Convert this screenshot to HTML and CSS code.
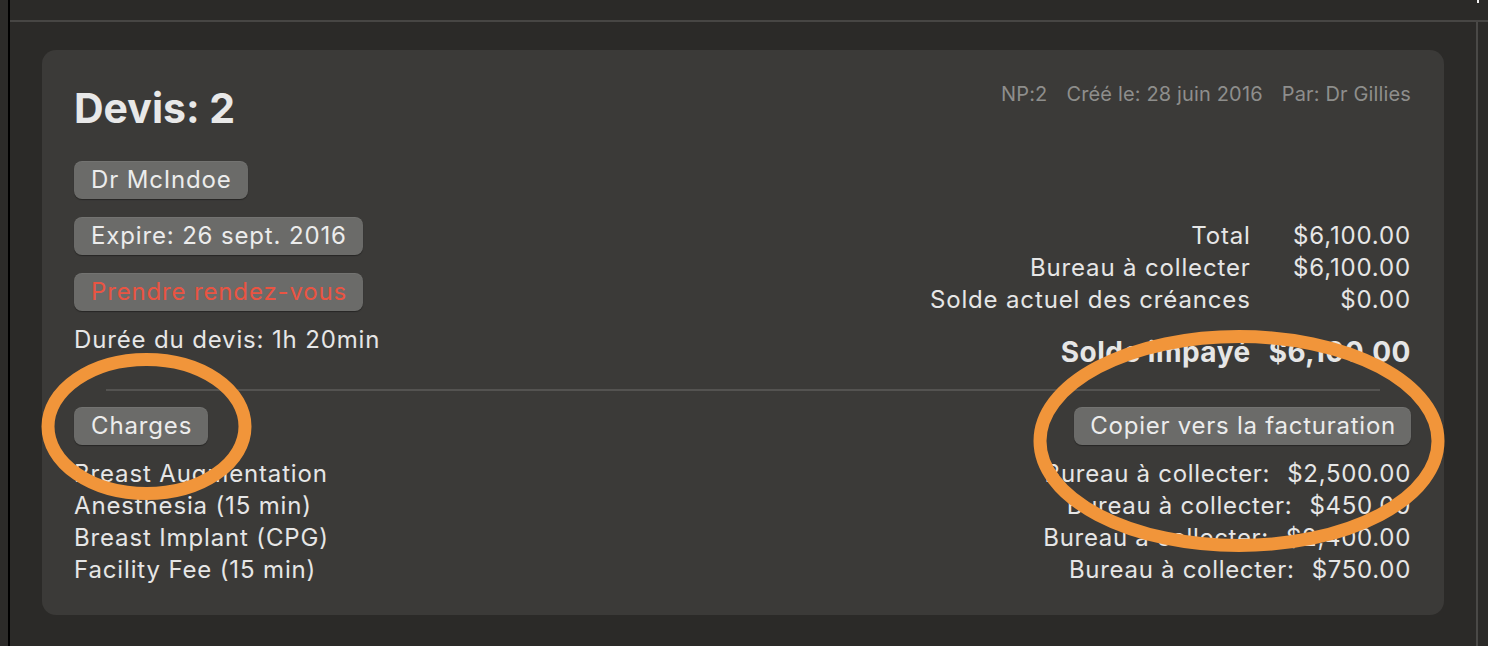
FILE: index.html
```html
<!DOCTYPE html>
<html lang="fr">
<head>
<meta charset="utf-8">
<title>Devis: 2</title>
<link rel="stylesheet" href="styles.css">
</head>
<body>
<div class="window">
  <div class="left-pane"></div>
  <div class="pane-split"></div>
  <div class="main">
    <div class="topbar"><span class="top-mark"></span></div>
    <div class="content-row">
      <div class="content">
        <section class="card">
          <div class="card-top">
            <div class="col-left">
              <h1 class="title">Devis: 2</h1>
              <button class="btn btn-first">Dr McIndoe</button>
              <button class="btn btn-next">Expire: 26 sept. 2016</button>
              <button class="btn btn-next btn-red">Prendre rendez-vous</button>
              <div class="duration">Durée du devis: 1h 20min</div>
            </div>
            <div class="col-right">
              <div class="meta">
                <span>NP:2</span>
                <span>Créé le: 28 juin 2016</span>
                <span>Par: Dr Gillies</span>
              </div>
              <div class="totals">
                <span class="t-label">Total</span><span class="t-value">$6,100.00</span>
                <span class="t-label">Bureau à collecter</span><span class="t-value">$6,100.00</span>
                <span class="t-label">Solde actuel des créances</span><span class="t-value">$0.00</span>
                <span class="t-label t-big">Solde impayé</span><span class="t-value t-big">$6,100.00</span>
              </div>
            </div>
          </div>
          <hr class="divider">
          <div class="card-bottom">
            <div class="col-left">
              <button class="btn">Charges</button>
              <ul class="items">
                <li>Breast Augmentation</li>
                <li>Anesthesia (15 min)</li>
                <li>Breast Implant (CPG)</li>
                <li>Facility Fee (15 min)</li>
              </ul>
            </div>
            <div class="col-right">
              <button class="btn">Copier vers la facturation</button>
              <ul class="items items-right">
                <li><span>Bureau à collecter:</span><span>$2,500.00</span></li>
                <li><span>Bureau à collecter:</span><span>$450.00</span></li>
                <li><span>Bureau à collecter:</span><span>$2,400.00</span></li>
                <li><span>Bureau à collecter:</span><span>$750.00</span></li>
              </ul>
            </div>
          </div>
        </section>
      </div>
      <div class="right-gutter"></div>
    </div>
  </div>
  <svg class="annotations" width="1488" height="646" viewBox="0 0 1488 646" aria-hidden="true">
    <ellipse cx="146.5" cy="426.5" rx="98.5" ry="67" fill="none" stroke="#f1953a" stroke-width="13"/>
    <ellipse cx="1239" cy="441" rx="199" ry="104.5" fill="none" stroke="#f1953a" stroke-width="13"/>
  </svg>
</div>
</body>
</html>
```

FILE: styles.css
```css
* { box-sizing: border-box; }
html, body {
  margin: 0;
  padding: 0;
  background: #2b2a28;
}
body {
  font-family: Inter, "Noto Sans", "Liberation Sans", sans-serif;
  color: #e6e6e6;
}
.window {
  position: relative;
  display: flex;
  width: 1488px;
  height: 646px;
  overflow: hidden;
  background: #2b2a28;
}
.left-pane {
  width: 8px;
  background: #2c2b29;
}
.pane-split {
  width: 2px;
  background: #000;
}
.main {
  flex: 1;
  display: flex;
  flex-direction: column;
}
.topbar {
  height: 22px;
  border-bottom: 2px solid #474644;
  display: flex;
  justify-content: flex-end;
}
.top-mark {
  width: 2px;
  height: 3px;
  background: #f2f2f2;
  margin-right: 9px;
}
.content-row {
  flex: 1;
  display: flex;
}
.content {
  flex: 1;
  padding: 28px 32px 0 32px;
}
.right-gutter {
  width: 12px;
  border-left: 2px solid #4a4947;
}
.card {
  background: #3b3a38;
  border-radius: 14px;
  padding: 32px 33px 31px 32px;
  height: 565px;
}
.card-top, .card-bottom {
  display: flex;
  justify-content: space-between;
}
.col-left {
  display: flex;
  flex-direction: column;
  align-items: flex-start;
}
.col-right {
  display: flex;
  flex-direction: column;
  align-items: flex-end;
}
.title {
  margin: 0;
  font-size: 41px;
  line-height: 52px;
  font-weight: 700;
  color: #e8e8e8;
}
.btn {
  font-family: inherit;
  font-size: 24px;
  letter-spacing: 0.85px;
  line-height: 38px;
  height: 38px;
  padding: 0 16px 0 17px;
  border: none;
  border-radius: 8px;
  background: #6b6b69;
  color: #ececec;
  box-shadow: 0 1px 1px rgba(0, 0, 0, 0.35), inset 0 1px 0 rgba(255, 255, 255, 0.06);
  white-space: nowrap;
}
.btn-first { margin-top: 27px; }
.btn-next { margin-top: 18px; }
.btn-red { color: #ea5442; }
.col-right > .btn { padding: 0 15px 0 16px; letter-spacing: 0.75px; }
.duration {
  margin-top: 13px;
  font-size: 24px;
  letter-spacing: 0.85px;
  line-height: 32px;
}
.meta {
  display: flex;
  gap: 19px;
  font-size: 20px;
  letter-spacing: 0.15px;
  line-height: 24px;
  color: #8e8e8c;
}
.totals {
  margin-top: 114px;
  display: grid;
  grid-template-columns: auto auto;
  column-gap: 18px;
  justify-items: end;
  font-size: 24px;
  letter-spacing: 0.85px;
  line-height: 32px;
}
.t-big {
  margin-top: 18px;
  font-size: 28px;
  letter-spacing: 0.5px;
  line-height: 36px;
  font-weight: 700;
}
.divider {
  margin: 19px 31px 0 32px;
  border: none;
  height: 2px;
  background: #545351;
}
.card-bottom { margin-top: 16px; }
.items {
  list-style: none;
  margin: 13px 0 0 0;
  padding: 0;
  font-size: 24px;
  letter-spacing: 0.85px;
  line-height: 32px;
}
.items-right {
  letter-spacing: 0.7px;
}
.items-right li {
  display: flex;
  justify-content: flex-end;
  gap: 17px;
}
.annotations {
  position: absolute;
  left: 0;
  top: 0;
  pointer-events: none;
}
```
